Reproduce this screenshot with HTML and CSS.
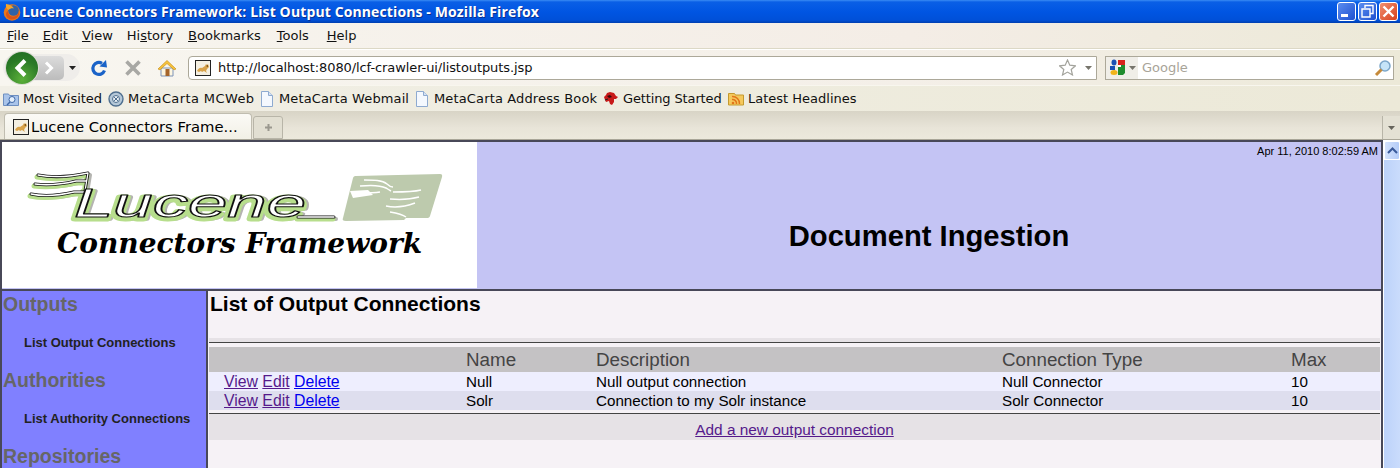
FILE: index.html
```html
<!DOCTYPE html>
<html lang="en">
<head>
    <meta charset="UTF-8">
    <title>Lucene Connectors Framework: List Output Connections</title>
    <link rel="stylesheet" href="styles.css">
</head>
<body>
    <!-- Window title -->
    <div class="titlebar">
        <svg class="ff-logo" width="18" height="18" viewBox="0 0 18 18">
            <circle cx="9" cy="9.500" r="8.300" fill="#e8791c"/>
            <circle cx="10.500" cy="7.500" r="5.300" fill="#2f62a8"/>
            <path d="M3 1c-.5 3 .5 5 2.500 6C7 5.500 9 5 11 5.500 9.500 3 6.500 1.500 3 1z" fill="#f4a52c"/>
            <path d="M5 8c0 4 3 6 6 5.500 2.500-.4 4.500-2.500 5-5 .7 4-2 8-7 8-3.500 0-6-2.500-6-5.500 0-1.200.8-2.300 2-3z" fill="#d9541a"/>
        </svg>
        <span class="title-text">Lucene Connectors Framework: List Output Connections - Mozilla Firefox</span>
        <div class="win-buttons">
            <span class="win-btn"><svg width="17" height="17" viewBox="0 0 17 17"><rect x="3" y="11" width="7" height="3" fill="#fff"/></svg></span>
            <span class="win-btn"><svg width="17" height="17" viewBox="0 0 17 17"><path d="M6 5V2.500h8v8h-3M3 6h8v8H3z" fill="none" stroke="#fff" stroke-width="1.400"/></svg></span>
            <span class="win-btn win-close"><svg width="17" height="17" viewBox="0 0 17 17"><path d="M3.500 3.500l10 10m0-10l-10 10" stroke="#fff" stroke-width="2.400"/></svg></span>
        </div>
    </div>

    <!-- Menu -->
    <div class="menubar">
        <span class="menu-item"><u>F</u>ile</span>
        <span class="menu-item"><u>E</u>dit</span>
        <span class="menu-item"><u>V</u>iew</span>
        <span class="menu-item menu-history">Hi<u>s</u>tory</span>
        <span class="menu-item menu-bookmarks"><u>B</u>ookmarks</span>
        <span class="menu-item menu-tools"><u>T</u>ools</span>
        <span class="menu-item"><u>H</u>elp</span>
    </div>

    <!-- Navigation toolbar -->
    <div class="navbar">
        <div class="back-forward">
            <span class="back-btn">
                <svg width="32" height="32" viewBox="0 0 32 32"><path d="M19 8.500L11.500 16l7.500 7.500" fill="none" stroke="#fff" stroke-width="4"/></svg>
            </span>
            <span class="forward-btn">
                <svg width="12" height="14" viewBox="0 0 12 14"><path d="M3 1.500L8.500 7 3 12.500" fill="none" stroke="#fff" stroke-width="3"/></svg>
            </span>
            <svg class="drop-arrow" width="7" height="4" viewBox="0 0 7 4"><path d="M0 0h7L3.500 4z" fill="#222"/></svg>
        </div>
        <svg class="nav-icon reload" width="18" height="18" viewBox="0 0 18 18"><path d="M14.500 11.500A6 6 0 1 1 12 4.300" fill="none" stroke="#1a63c8" stroke-width="3.200"/><path d="M9.500 7.500L17 8.500 16 1z" fill="#1a63c8"/></svg>
        <svg class="nav-icon stop" width="18" height="18" viewBox="0 0 18 18"><path d="M2.500 2.500l13 13m0-13l-13 13" stroke="#a8a8a4" stroke-width="3.600"/></svg>
        <svg class="nav-icon home" width="20" height="18" viewBox="0 0 20 18"><path d="M4 9v8h12V9z" fill="#fdf6e0" stroke="#7d93b8"/><path d="M1 10l9-8.500L19 10l-2 .8L10 4.500 3 10.800z" fill="#f7c43c" stroke="#c98f1a" stroke-width=".7"/><rect x="8.500" y="10" width="4" height="7" fill="#a5652b"/></svg>
        <div class="urlbar">
            <svg class="tomcat" width="16" height="16" viewBox="0 0 16 16"><rect x=".5" y=".5" width="15" height="15" fill="#f4efe2" stroke="#222"/><path d="M2 11c1-2 3-4 5-3l3-2 1-2 1 1 1-1 1 3-2 2-1 2 1 2-3-2-2 1-1-1-2 1z" fill="#d8a24a"/><path d="M11 6l2-1v2z" fill="#6a4414"/></svg>
            <span class="url-text">http://localhost:8080/lcf-crawler-ui/listoutputs.jsp</span>
            <svg class="star" width="17" height="17" viewBox="0 0 17 17"><path d="M8.500 1l2.300 5.200 5.700.6-4.300 3.700 1.300 5.500-5-2.900-5 2.900 1.300-5.500L.5 6.800l5.700-.6z" fill="#fff" stroke="#a3a39c" stroke-width="1.200"/></svg>
            <svg class="url-arrow" width="7" height="4" viewBox="0 0 7 4"><path d="M0 0h7L3.500 4z" fill="#77756c"/></svg>
        </div>
        <div class="searchbar">
            <span class="engine">
                <svg width="17" height="17" viewBox="0 0 17 17"><ellipse cx="5" cy="3.500" rx="2.500" ry="3" fill="#1c50b4"/><path d="M1 7h5v4H1z" fill="#1c50b4"/><ellipse cx="5" cy="13.500" rx="3.500" ry="2.500" fill="#f0b41a"/><path d="M9 1h7v5H9z" fill="#d8231c"/><path d="M9 6h7v8l-2 2H9z" fill="#1f8c2e"/><path d="M9 6h3v2H9z" fill="#fff"/></svg>
                <svg width="7" height="4" viewBox="0 0 7 4"><path d="M0 0h7L3.500 4z" fill="#77756c"/></svg>
            </span>
            <span class="search-hint">Google</span>
            <svg class="magnifier" width="18" height="18" viewBox="0 0 18 18"><circle cx="11" cy="7" r="5" fill="#c5e4f8" stroke="#7ba6c9" stroke-width="1.500"/><path d="M7.500 10.500L2 16" stroke="#c68a3a" stroke-width="3"/></svg>
        </div>
    </div>

    <!-- Bookmarks -->
    <div class="bookmarks">
        <span class="bookmark bm-most">
            <svg width="16" height="16" viewBox="0 0 16 16"><path d="M.5 3h5l1 1.500h9v10H.5z" fill="#a9c4ea" stroke="#6e8fc0"/><circle cx="9" cy="8.500" r="3" fill="#e4effb" stroke="#3f68a8"/><path d="M7 11l-3 3" stroke="#3f68a8" stroke-width="1.500"/></svg>
            Most Visited
        </span>
        <span class="bookmark bm-mc">
            <svg width="16" height="16" viewBox="0 0 16 16"><circle cx="8" cy="8" r="7" fill="#b5c8d8" stroke="#4f6f8f" stroke-width="1.400"/><circle cx="8" cy="8" r="3.500" fill="#e9f0f5" stroke="#4f6f8f"/><path d="M6 6l4 4m0-4l-4 4" stroke="#4f6f8f"/></svg>
            MetaCarta MCWeb
        </span>
        <span class="bookmark bm-web">
            <svg width="14" height="16" viewBox="0 0 14 16"><path d="M1.500.5h7l4 4v11h-11z" fill="#f4f8fe" stroke="#8eaad0"/><path d="M8.500.5v4h4" fill="#d5e2f4" stroke="#8eaad0"/></svg>
            MetaCarta Webmail
        </span>
        <span class="bookmark bm-addr">
            <svg width="14" height="16" viewBox="0 0 14 16"><path d="M1.500.5h7l4 4v11h-11z" fill="#f4f8fe" stroke="#8eaad0"/><path d="M8.500.5v4h4" fill="#d5e2f4" stroke="#8eaad0"/></svg>
            MetaCarta Address Book
        </span>
        <span class="bookmark bm-started">
            <svg width="16" height="16" viewBox="0 0 16 16"><path d="M1 6l2-2 1-2 3-1 4 1 2 3 2 1-2 2-2 0 0 3-2 3-2-1-1-3-3 1-1-2z" fill="#c81a1a"/><path d="M4 5l3-1 2 2-3 1z" fill="#3a0a0a"/><path d="M2 9l3-1" stroke="#222"/></svg>
            Getting Started
        </span>
        <span class="bookmark bm-latest">
            <svg width="16" height="16" viewBox="0 0 16 16"><path d="M.5 2.500h6l1 1.500h8v10H.5z" fill="#f5c95c" stroke="#c49a2e"/><circle cx="5" cy="12" r="1.300" fill="#e2761a"/><path d="M4 8.500a4 4 0 0 1 4.500 4.500M4 5.500a7 7 0 0 1 7.500 7.500" fill="none" stroke="#e2761a" stroke-width="1.500"/></svg>
            Latest Headlines
        </span>
    </div>

    <!-- Tabs -->
    <div class="tabbar">
        <div class="tab">
            <svg width="16" height="16" viewBox="0 0 16 16"><rect x=".5" y=".5" width="15" height="15" fill="#f4efe2" stroke="#222"/><path d="M2 11c1-2 3-4 5-3l3-2 1-2 1 1 1-1 1 3-2 2-1 2 1 2-3-2-2 1-1-1-2 1z" fill="#d8a24a"/><path d="M11 6l2-1v2z" fill="#6a4414"/></svg>
            <span>Lucene Connectors Frame...</span>
        </div>
        <div class="new-tab">
            <svg width="9" height="9" viewBox="0 0 9 9"><path d="M4.500 1v7M1 4.500h7" stroke="#9a988e" stroke-width="2"/></svg>
        </div>
        <div class="tab-list">
            <svg width="7" height="4" viewBox="0 0 7 4"><path d="M0 0h7L3.500 4z" fill="#66645c"/></svg>
        </div>
    </div>

    <!-- Page content -->
    <div class="viewport">
        <div class="frame">
            <div class="banner">
                <div class="logo">
                    <svg width="475" height="146" viewBox="0 0 475 146">
                        <defs>
                            <path id="lucene-wings" fill="none" d="M36 33c16 3 36 1 50-2l-3 18M33 42c14 2 28 0 41-3l10 0M29 52c14 3 30 1 43-2l10 0M296 75h36"/>
                            <text id="lucene-word" class="lucene-text" x="72" y="75" textLength="232" lengthAdjust="spacingAndGlyphs">Lucene</text>
                        </defs>
                        <g stroke-linejoin="round" stroke-linecap="round">
                            <g class="mark-shadow" transform="translate(2 2)">
                                <use href="#lucene-wings"/>
                                <use href="#lucene-word"/>
                            </g>
                            <g class="mark-green" transform="translate(-1 2)">
                                <use href="#lucene-wings"/>
                                <use href="#lucene-word"/>
                            </g>
                            <use href="#lucene-wings" class="mark-outline"/>
                            <use href="#lucene-wings" class="mark-core"/>
                            <use href="#lucene-word" class="mark-top"/>
                        </g>
                        <!-- flag -->
                        <path d="M351 36c.5-1.500 1.500-2 3-2l84-2c2 0 2.500 1 2 3l-12 39c-.5 1.500-1.500 2-3 2h-21l-2 2-58 1c-3 0-4-1-3-3z" fill="#bdcaad"/>
                        <path d="M348 49l18-1 5 5-20 3z" fill="#fff"/>
                        <g fill="none" stroke="#fff" stroke-width="1.500">
                            <path d="M362 38c10 0 18 0 23 4 2 2 4 3 6 3M358 44c10-1 20-1 26 2 2 1 3 2 5 3M358 51c8 0 14 0 20-1"/>
                            <path d="M391 50c10 0 20 0 28-2M388 57c12 1 22 0 29-2M384 64c10 2 21 0 29-3M388 70c6 1 12 2 16 5"/>
                        </g>
                        <text class="logo-sub" x="55" y="111">Connectors Framework</text>
                    </svg>
                </div>
                <div class="banner-right">
                    <div class="timestamp">Apr 11, 2010 8:02:59 AM</div>
                    <div class="app-title">Document Ingestion</div>
                </div>
            </div>
            <div class="columns">
                <div class="sidebar">
                    <div class="nav-group">Outputs</div>
                    <div class="nav-link">List Output Connections</div>
                    <div class="nav-group">Authorities</div>
                    <div class="nav-link">List Authority Connections</div>
                    <div class="nav-group">Repositories</div>
                </div>
                <div class="main">
                    <h2 class="page-title">List of Output Connections</h2>
                    <div class="rule-band"></div>
                    <table class="list-table">
                        <tr class="head-row">
                            <th class="col-actions"></th>
                            <th class="col-name">Name</th>
                            <th class="col-desc">Description</th>
                            <th class="col-type">Connection Type</th>
                            <th>Max</th>
                        </tr>
                        <tr class="row-a">
                            <td class="actions"><a class="visited" href="#">View</a> <a class="visited" href="#">Edit</a> <a href="#">Delete</a></td>
                            <td>Null</td>
                            <td>Null output connection</td>
                            <td>Null Connector</td>
                            <td>10</td>
                        </tr>
                        <tr class="row-b">
                            <td class="actions"><a class="visited" href="#">View</a> <a class="visited" href="#">Edit</a> <a href="#">Delete</a></td>
                            <td>Solr</td>
                            <td>Connection to my Solr instance</td>
                            <td>Solr Connector</td>
                            <td>10</td>
                        </tr>
                    </table>
                    <div class="rule-bottom"></div>
                    <div class="add-row"><a class="visited" href="#">Add a new output connection</a></div>
                </div>
            </div>
        </div>
        <div class="scrollbar">
            <span class="scroll-up">
                <svg width="11" height="7" viewBox="0 0 11 7"><path d="M1 6l4.500-4.500L10 6" fill="none" stroke="#3a5a9a" stroke-width="2"/></svg>
            </span>
            <span class="scroll-track"></span>
        </div>
    </div>
</body>
</html>
```

FILE: styles.css
```css
/* General styles */
html, body {
    height: 100%;
}

body {
    margin: 0;
    display: flex;
    flex-direction: column;
    overflow: hidden;
    background: #ece9d8;
    font-family: 'Liberation Sans', Arial, sans-serif;
    color: #000;
}

/* Window chrome */
.titlebar {
    height: 23px;
    flex: none;
    display: flex;
    align-items: center;
    padding: 0 1px 0 3px;
    background: linear-gradient(#3a8cf4 0, #0a5fe6 2px, #0055e2 12px, #0050d8 20px, #003fb0 23px);
}

.ff-logo {
    flex: none;
}

.title-text {
    margin-left: 1px;
    color: #fff;
    font-family: 'Open Sans', sans-serif;
    font-weight: 700;
    font-size: 14px;
    letter-spacing: .12px;
    white-space: nowrap;
    text-shadow: 1px 1px 0 #0a2f90;
}

.win-buttons {
    margin-left: auto;
    display: flex;
    gap: 2px;
    padding-right: 1px;
}

.win-btn {
    width: 17px;
    height: 17px;
    display: block;
    overflow: hidden;
    border: 1px solid #fff;
    border-radius: 3px;
    background: linear-gradient(135deg, #5b8df0, #1f50d0);
}

.win-close {
    background: linear-gradient(135deg, #f09070, #d8401c);
}

.menubar {
    height: 26px;
    flex: none;
    box-sizing: border-box;
    display: flex;
    align-items: center;
    padding-left: 7px;
    border-bottom: 1px solid #dcd8c6;
    background: linear-gradient(90deg, #f7f5ef, #f4ede6 65%, #ece9d8);
    font-family: 'DejaVu Sans', sans-serif;
    font-size: 13px;
    color: #111;
}

.menu-item {
    margin-right: 14px;
}

.menu-history {
    margin-right: 15px;
}

.menu-bookmarks {
    margin-right: 16px;
}

.menu-tools {
    margin-right: 18px;
}

.navbar {
    height: 37px;
    flex: none;
    box-sizing: border-box;
    display: flex;
    align-items: center;
    padding: 0 7px 0 3px;
    border-top: 1px solid #fff;
    border-bottom: 1px solid #f8f6ee;
    background: linear-gradient(90deg, #f8f6f0, #f4efe8 65%, #ece9d8);
}

.back-forward {
    width: 77px;
    height: 27px;
    flex: none;
    display: flex;
    align-items: center;
    padding-left: 3px;
    box-sizing: border-box;
    border-radius: 14px;
    background: #efedea;
}

.back-btn {
    width: 32px;
    height: 32px;
    flex: none;
    z-index: 1;
    border-radius: 50%;
    box-shadow: 0 0 0 1px #dcdcd4;
    background: radial-gradient(circle at 50% 85%, #5cb03a, #2a7a26 60%, #1f6a22);
}

.forward-btn {
    width: 34px;
    height: 24px;
    flex: none;
    margin-left: -8px;
    display: flex;
    align-items: center;
    justify-content: center;
    padding-left: 4px;
    box-sizing: border-box;
    border-radius: 0 5px 5px 0;
    background: linear-gradient(#dcdcdc, #bcbcbc);
}

.drop-arrow {
    margin-left: 5px;
}

.nav-icon {
    flex: none;
}

.reload {
    margin-left: 10px;
}

.stop {
    margin-left: 16px;
}

.home {
    margin-left: 15px;
}

.urlbar {
    width: 907px;
    height: 22px;
    flex: none;
    display: flex;
    align-items: center;
    margin-left: 11px;
    border: 1px solid #aca899;
    border-radius: 4px 0 0 4px;
    background: #fff;
}

.tomcat {
    margin-left: 6px;
    flex: none;
}

.url-text {
    margin-left: 7px;
    font-family: 'DejaVu Sans', sans-serif;
    font-size: 13px;
    letter-spacing: -.09px;
    color: #111;
    white-space: nowrap;
}

.star {
    margin-left: auto;
    flex: none;
}

.url-arrow {
    flex: none;
    margin: 0 4px 0 9px;
}

.searchbar {
    width: 287px;
    height: 22px;
    flex: none;
    display: flex;
    align-items: center;
    margin-left: 8px;
    border: 1px solid #aca899;
    background: #fff;
}

.engine {
    width: 32px;
    height: 22px;
    flex: none;
    display: flex;
    align-items: center;
    gap: 3px;
    padding-left: 3px;
    box-sizing: border-box;
    background: #f0eee8;
}

.search-hint {
    margin-left: 4px;
    font-family: 'DejaVu Sans', sans-serif;
    font-size: 13px;
    color: #a8a498;
}

.magnifier {
    margin-left: auto;
    margin-right: 1px;
}

.bookmarks {
    height: 25px;
    flex: none;
    box-sizing: border-box;
    display: flex;
    align-items: center;
    padding-left: 3px;
    background: linear-gradient(90deg, #f1efe6, #ece9d8);
    font-family: 'DejaVu Sans', sans-serif;
    font-size: 13px;
    color: #111;
    white-space: nowrap;
}

.bookmark {
    display: flex;
    align-items: center;
    gap: 4px;
}

.bm-most { width: 105px; }
.bm-mc { width: 151px; letter-spacing: .4px; }
.bm-web { width: 155px; gap: 5px; letter-spacing: .12px; padding-left: 1px; box-sizing: border-box; }
.bm-addr { width: 189px; gap: 5px; letter-spacing: .14px; padding-left: 1px; box-sizing: border-box; }
.bm-started { width: 125px; letter-spacing: -.13px; }

.tabbar {
    height: 29px;
    flex: none;
    box-sizing: border-box;
    display: flex;
    align-items: flex-end;
    padding-left: 4px;
    border-bottom: 1px solid #a9a698;
    background: linear-gradient(#d8d4c6, #e8e4d8 60%, #ece9dc);
}

.tab {
    width: 248px;
    height: 26px;
    box-sizing: border-box;
    display: flex;
    align-items: center;
    gap: 2px;
    padding: 0 0 0 8px;
    border: 1px solid #c0bdb0;
    border-bottom: none;
    border-radius: 4px 4px 0 0;
    background: linear-gradient(#fbfaf6, #f2f0e6);
    font-family: 'DejaVu Sans', sans-serif;
    font-size: 14.8px;
    white-space: nowrap;
}

.new-tab {
    width: 30px;
    height: 23px;
    box-sizing: border-box;
    display: flex;
    align-items: center;
    justify-content: center;
    margin: 0 0 0 1px;
    border: 1px solid #b8b5a8;
    border-radius: 3px 3px 0 0;
    background: #e2dfd2;
}

.tab-list {
    width: 18px;
    height: 23px;
    box-sizing: border-box;
    display: flex;
    align-items: center;
    justify-content: center;
    margin-left: auto;
    border-left: 1px solid #b8b5a8;
    background: #e4e1d4;
}

/* Page content */
.viewport {
    flex: 1;
    min-height: 0;
    display: flex;
    background: #fff;
}

.frame {
    width: 1383px;
    flex: none;
    box-sizing: border-box;
    display: flex;
    flex-direction: column;
    overflow: hidden;
    border: 2px solid #484858;
    border-bottom: none;
    background: #f6f2f6;
}

.banner {
    height: 149px;
    flex: none;
    box-sizing: border-box;
    display: flex;
    border-bottom: 2px solid #484858;
    background: #c4c4f4;
}

.logo {
    width: 475px;
    flex: none;
    background: #fff;
    border-bottom: 1px solid #c4c4f4;
    overflow: hidden;
}

/* Logo wordmark, painted in layers through <use> */
.lucene-text {
    font-family: 'Liberation Sans', sans-serif;
    font-style: italic;
    font-size: 40px;
}

.mark-shadow {
    fill: #b4b4b0;
    stroke: #b4b4b0;
    stroke-width: 4px;
}

.mark-green {
    fill: #b7de8c;
    stroke: #b7de8c;
    stroke-width: 5px;
}

.mark-outline {
    stroke: #111;
    stroke-width: 3px;
}

.mark-core {
    stroke: #fff;
    stroke-width: 1.300px;
}

.mark-top {
    fill: #fff;
    stroke: #111;
    stroke-width: 1.100px;
}

.logo-sub {
    font-family: 'DejaVu Serif', serif;
    font-style: italic;
    font-weight: 700;
    font-size: 28px;
}

.banner-right {
    flex: 1;
    display: flex;
    flex-direction: column;
}

.timestamp {
    padding: 3px 3px 0 0;
    text-align: right;
    font-size: 11px;
}

.app-title {
    margin-top: 63px;
    text-align: center;
    font-weight: 700;
    font-size: 29.200px;
}

.columns {
    flex: 1;
    min-height: 0;
    display: flex;
}

.sidebar {
    width: 204px;
    flex: none;
    box-sizing: border-box;
    padding-left: 1px;
    background: #8080ff;
}

.nav-group {
    height: 28px;
    line-height: 26px;
    font-weight: 700;
    font-size: 19.500px;
    color: #666;
}

.nav-link {
    height: 48px;
    line-height: 48px;
    padding-left: 21px;
    font-weight: 700;
    font-size: 13px;
    color: #222;
}

.main {
    flex: 1;
    padding: 0 1px;
    border-left: 2px solid #484858;
}

.page-title {
    height: 47px;
    margin: 0;
    padding-left: 1px;
    line-height: 26px;
    font-size: 21px;
}

.rule-band {
    height: 4px;
    border-bottom: 1px solid #444;
    margin-bottom: 4px;
    background: #e6e2e6;
}

.list-table {
    width: 100%;
    table-layout: fixed;
    border-collapse: collapse;
    font-size: 15.200px;
}

.list-table th, .list-table td {
    padding: 0;
    text-align: left;
}

.col-actions { width: 257px; }
.col-name { width: 130px; }
.col-desc { width: 406px; }
.col-type { width: 289px; }

.head-row {
    height: 25px;
    background: #c4c2c4;
}

.head-row th {
    font-weight: 400;
    font-size: 18.800px;
    color: #444;
}

.row-a {
    height: 19px;
    background: #eeeefe;
}

.row-b {
    height: 19px;
    background: #dedeee;
}

.list-table .actions {
    padding-left: 15px;
    font-size: 15.800px;
}

a {
    color: #0000ee;
}

a.visited {
    color: #551a8b;
}

.rule-bottom {
    height: 1px;
    margin-top: 3px;
    background: #444;
}

.add-row {
    height: 26px;
    line-height: 31px;
    text-align: center;
    font-size: 15.400px;
    background: #e6e2e6;
}

.scrollbar {
    flex: 1;
    display: flex;
    flex-direction: column;
    padding: 1px 0 0 1px;
    background: #fff;
}

.scroll-up {
    height: 17px;
    flex: none;
    display: flex;
    align-items: center;
    justify-content: center;
    border: 1px solid #fff;
    border-radius: 2px;
    background: linear-gradient(90deg, #d4e2fc, #b4ccf8);
}

.scroll-track {
    flex: 1;
    background: linear-gradient(90deg, #bcd2fa, #cadcfc);
}
```
